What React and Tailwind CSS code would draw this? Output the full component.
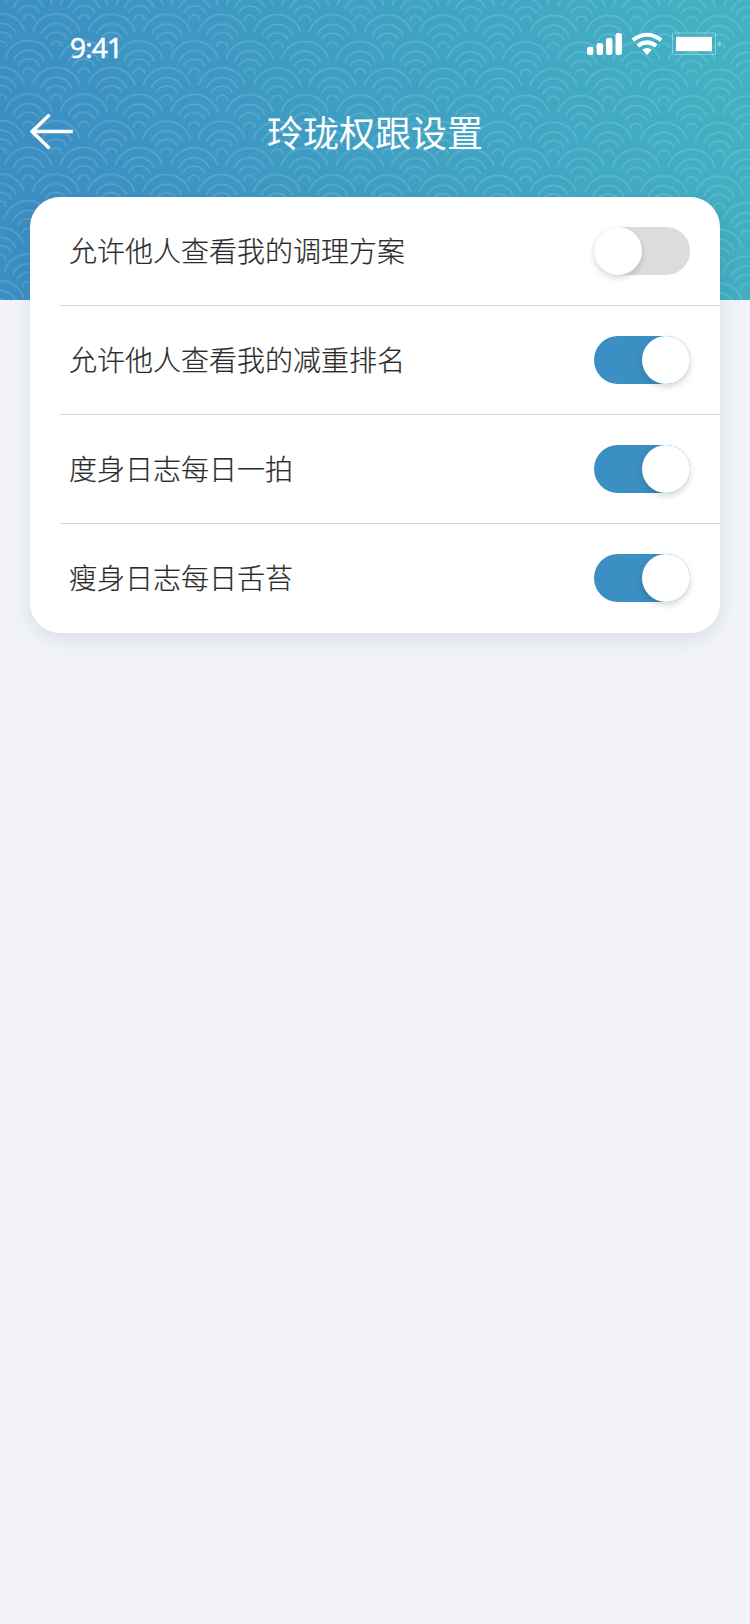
import React, { useState } from 'react';

const SETTINGS = [
  { id: 'plan', label: '允许他人查看我的调理方案', enabled: false },
  { id: 'rank', label: '允许他人查看我的减重排名', enabled: true },
  { id: 'body', label: '度身日志每日一拍', enabled: true },
  { id: 'tongue', label: '瘦身日志每日舌苔', enabled: true }
];

// 单个波纹图案：四条同向弧线
const WAVE = 'M-23.5 19A24.5 24.5 0 0 1 23.5 19M-15.5 22A16.5 16.5 0 0 1 15.5 22M-10.8 26.5A12 12 0 0 1 10.8 26.5M-5.6 34.4A5.6 5.6 0 0 1 5.6 34.4';

// 头部波纹背景
function WaveBackground() {
  return <svg className="absolute inset-0 h-full w-full" aria-hidden="true">
      <defs>
        <pattern id="wave" width="55.25" height="53.4" patternUnits="userSpaceOnUse" patternTransform="rotate(0.17) translate(84.1 11.3)">
          <g fill="none" stroke="#fff" strokeOpacity="0.16" strokeWidth="1.5">
            <path d={WAVE} transform="translate(27.6 1)" />
            <path d={WAVE} transform="translate(0 27.7)" />
            <path d={WAVE} transform="translate(55.25 27.7)" />
            <path d={WAVE} transform="translate(0 -25.7)" />
            <path d={WAVE} transform="translate(55.25 -25.7)" />
          </g>
        </pattern>
      </defs>
      <rect width="100%" height="100%" fill="url(#wave)" />
    </svg>;
}

// 状态栏：时间、信号、WiFi、电量
function StatusBar() {
  return <div className="flex h-[88px] items-start justify-between pl-[70px] pr-7">
      <span className="mt-[27px] font-['Open_Sans','Noto_Sans',sans-serif] text-[28px] leading-10 tracking-[-0.8px] [-webkit-text-stroke:0.6px_#fff]">9:41</span>
      <svg className="mt-8" width="135" height="24" viewBox="587 32 135 24" fill="none">
        <g fill="#fff">
          <rect x="587" y="46.7" width="6.4" height="8.3" rx="2.2" />
          <rect x="596.6" y="43" width="6.4" height="12" rx="2.2" />
          <rect x="606" y="38" width="6.4" height="17" rx="2.2" />
          <rect x="615.5" y="33" width="6.4" height="22" rx="2.2" />
          <path d="M642.3 49.8q4.7-3.6 9.4 0L647 54.9z" />
          <rect x="676" y="36.8" width="36" height="14.4" />
          <path d="M718.5 41v6q2.4-1 2.4-3t-2.4-3z" fillOpacity="0.4" />
        </g>
        <path d="M632.8 40.2q14.2-11 28.4 0M637.8 46q9.2-7.2 18.4 0" stroke="#fff" strokeWidth="4" />
        <rect x="672.5" y="33" width="43" height="21.5" rx="1" stroke="#fff" strokeOpacity="0.35" />
      </svg>
    </div>;
}

function Toggle({ checked, onChange }) {
  return <button type="button" role="switch" aria-checked={checked} onClick={onChange} className={`flex h-12 w-24 rounded-full ${checked ? 'justify-end bg-[#3b8fc3]' : 'justify-start bg-[#dcdcdc]'}`}>
      <span className="h-12 w-12 rounded-full bg-white shadow-[0_3px_6px_rgba(0,0,0,0.16)]" />
    </button>;
}

export default function App() {
  const [settings, setSettings] = useState(SETTINGS);

  // 切换开关
  const handleToggle = id => {
    setSettings(settings.map(item => item.id === id ? { ...item, enabled: !item.enabled } : item));
  };
  return <div className="min-h-screen bg-[#f2f4f9] font-['Noto_Sans_CJK_SC',sans-serif]">
      {/* 顶部区域 */}
      <header className="relative h-[300px] bg-[linear-gradient(75deg,#3b8ec3_0%,#3b8ec3_7%,#42b1c3_95%,#42b1c3_100%)] text-white">
        <WaveBackground />
        <div className="relative">
          <StatusBar />
          <div className="grid h-[88px] grid-cols-[100px_1fr_100px] items-center">
            <button type="button" aria-label="返回" className="pl-[30px]">
              <svg width="44" height="36" viewBox="0 0 44 36" fill="none" stroke="#fff" strokeWidth="3.5" strokeLinecap="round" strokeLinejoin="round">
                <path d="M18.5 1.8L2 17.6l16.5 15.8" />
                <path d="M2 17.6h40.8" strokeLinecap="butt" />
              </svg>
            </button>
            <h1 className="pb-0.5 text-center text-4xl font-normal">玲珑权跟设置</h1>
          </div>
        </div>
      </header>

      {/* 设置列表 */}
      <main className="relative mx-[30px] -mt-[103px] h-[436px] rounded-[30px] bg-white shadow-[0_6px_20px_rgba(70,95,115,0.15)]">
        {settings.map(item => <div key={item.id} className="ml-[30px] flex h-[109px] items-center justify-between border-b border-[#d6d6d6] pl-[9px] pr-[30px] last:border-transparent">
            <span className="pb-0.5 text-[28px] font-light leading-10 text-[#2b2b2b] [-webkit-text-stroke:0.2px_#2b2b2b]">{item.label}</span>
            <Toggle checked={item.enabled} onChange={() => handleToggle(item.id)} />
          </div>)}
      </main>
    </div>;
}
